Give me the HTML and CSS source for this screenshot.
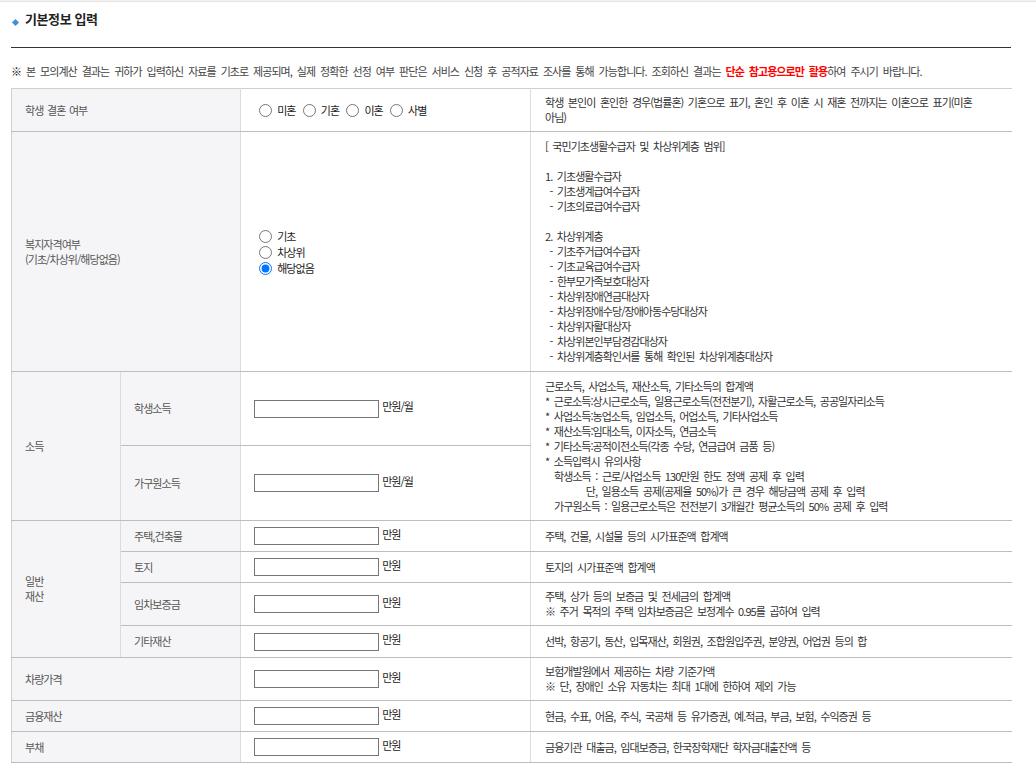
FILE: index.html
```html
<!DOCTYPE html>
<html lang="ko">
<head>
<meta charset="utf-8">
<title>기본정보 입력</title>
<link rel="stylesheet" href="styles.css">
</head>
<body>
<div class="topstrip"><span></span><span></span><span></span></div>
<div class="wrap">
  <h2 class="title"><span class="diamond"></span>기본정보 입력</h2>
  <p class="notice"><b class="kome">※</b> 본 모의계산 결과는 귀하가 입력하신 자료를 기초로 제공되며, 실제 정확한 선정 여부 판단은 서비스 신청 후 공적자료 조사를 통해 가능합니다. 조회하신 결과는 <strong class="red">단순 참고용으로만 활용</strong>하여 주시기 바랍니다.</p>
  <table class="form">
    <colgroup>
      <col class="c1"><col class="c2"><col class="c3"><col class="c4">
    </colgroup>
    <tbody>
      <tr class="h43">
        <th colspan="2">학생 결혼 여부</th>
        <td class="inp"><label><input type="radio" name="m"> 미혼</label> <label><input type="radio" name="m"> 기혼</label> <label><input type="radio" name="m"> 이혼</label> <label><input type="radio" name="m"> 사별</label></td>
        <td class="desc">학생 본인이 혼인한 경우(법률혼) 기혼으로 표기, 혼인 후 이혼 시 재혼 전까지는 이혼으로 표기(미혼 아님)</td>
      </tr>
      <tr class="h240">
        <th colspan="2">복지자격여부<br>(기초/차상위/해당없음)</th>
        <td class="inp vradio">
          <label><input type="radio" name="w"> 기초</label>
          <label><input type="radio" name="w"> 차상위</label>
          <label><input type="radio" name="w" checked> 해당없음</label>
        </td>
        <td class="desc pre">[ 국민기초생활수급자 및 차상위계층 범위]

1. 기초생활수급자
 - 기초생계급여수급자
 - 기초의료급여수급자

2. 차상위계층
 - 기초주거급여수급자
 - 기초교육급여수급자
 - 한부모가족보호대상자
 - 차상위장애연금대상자
 - 차상위장애수당/장애아동수당대상자
 - 차상위자활대상자
 - 차상위본인부담경감대상자
 - 차상위계층확인서를 통해 확인된 차상위계층대상자</td>
      </tr>
      <tr class="h74">
        <th rowspan="2" class="g">소득</th>
        <th class="sub">학생소득</th>
        <td class="inp"><input type="text" class="box"> 만원/월</td>
        <td class="desc pre" rowspan="2">근로소득, 사업소득, 재산소득, 기타소득의 합계액
* 근로소득:상시근로소득, 일용근로소득(전전분기), 자활근로소득, 공공일자리소득
* 사업소득:농업소득, 임업소득, 어업소득, 기타사업소득
* 재산소득:임대소득, 이자소득, 연금소득
* 기타소득:공적이전소득(각종 수당, 연금급여 금품 등)
* 소득입력시 유의사항
  학생소득 : 근로/사업소득 130만원 한도 정액 공제 후 입력
         단, 일용소득 공제(공제율 50%)가 큰 경우 해당금액 공제 후 입력
  가구원소득 : 일용근로소득은 전전분기 3개월간 평균소득의 50% 공제 후 입력</td>
      </tr>
      <tr class="h75">
        <th class="sub">가구원소득</th>
        <td class="inp"><input type="text" class="box"> 만원/월</td>
      </tr>
      <tr class="h31">
        <th rowspan="4" class="g">일반<br>재산</th>
        <th class="sub">주택,건축물</th>
        <td class="inp"><input type="text" class="box"> 만원</td>
        <td class="desc">주택, 건물, 시설물 등의 시가표준액 합계액</td>
      </tr>
      <tr class="h31">
        <th class="sub">토지</th>
        <td class="inp"><input type="text" class="box"> 만원</td>
        <td class="desc">토지의 시가표준액 합계액</td>
      </tr>
      <tr class="h43">
        <th class="sub">임차보증금</th>
        <td class="inp"><input type="text" class="box"> 만원</td>
        <td class="desc">주택, 상가 등의 보증금 및 전세금의 합계액<br>※ 주거 목적의 주택 임차보증금은 보정계수 0.95를 곱하여 입력</td>
      </tr>
      <tr class="h32">
        <th class="sub">기타재산</th>
        <td class="inp"><input type="text" class="box"> 만원</td>
        <td class="desc">선박, 항공기, 동산, 입목재산, 회원권, 조합원입주권, 분양권, 어업권 등의 합</td>
      </tr>
      <tr class="h43">
        <th colspan="2">차량가격</th>
        <td class="inp"><input type="text" class="box"> 만원</td>
        <td class="desc">보험개발원에서 제공하는 차량 기준가액<br>※ 단, 장애인 소유 자동차는 최대 1대에 한하여 제외 가능</td>
      </tr>
      <tr class="h31">
        <th colspan="2">금융재산</th>
        <td class="inp"><input type="text" class="box"> 만원</td>
        <td class="desc">현금, 수표, 어음, 주식, 국공채 등 유가증권, 예.적금, 부금, 보험, 수익증권 등</td>
      </tr>
      <tr class="h31">
        <th colspan="2">부채</th>
        <td class="inp"><input type="text" class="box"> 만원</td>
        <td class="desc">금융기관 대출금, 임대보증금, 한국장학재단 학자금대출잔액 등</td>
      </tr>
    </tbody>
  </table>
</div>
</body>
</html>
```

FILE: styles.css
```css
* { box-sizing: border-box; }
html, body { margin: 0; padding: 0; background: #fff; }
body {
  font-family: "Noto Sans CJK KR", "Noto Sans", sans-serif;
  font-size: 11px;
  color: #333;
  letter-spacing: -0.95px;
  word-spacing: 2.4px;
}
.topstrip {
  height: 2px;
  background: #f2f2f2;
  border-bottom: 1px solid #e4e4e4;
  display: flex;
}
.wrap {
  padding-left: 11px;
  width: 1011px;
}
.title {
  margin: 0;
  padding-top: 8px;
  height: 46px;
  font-size: 13px;
  font-weight: bold;
  color: #222;
  letter-spacing: -0.4px;
  word-spacing: 0;
  border-bottom: 1px solid #333;
  display: flex;
  align-items: flex-start;
  line-height: 18px;
}
.diamond {
  width: 5px;
  height: 5px;
  background: #3f8fd9;
  transform: rotate(45deg);
  margin: 10px 7px 0 2px;
}
.notice {
  margin: 0;
  height: 40px;
  padding-top: 16px;
  line-height: 15px;
  color: #444;
  white-space: nowrap;
  word-spacing: 2.8px;
}
.kome { color: #111; font-weight: bold; }
.red { color: #f00; font-weight: bold; }
.form {
  width: 1000px;
  border-collapse: collapse;
  table-layout: fixed;
  border-top: 1px solid #cfcfcf;
  border-left: 1px solid #d0d0d0;
}
.c1 { width: 109px; }
.c2 { width: 120px; }
.c3 { width: 290px; }
.c4 { width: 481px; }
.form th, .form td {
  border-bottom: 1px solid #bdbdbd;
  border-right: 1px solid #dcdcdc;
  line-height: 15px;
  vertical-align: middle;
  padding: 0;
}
.form td.desc { border-right: none; }
.form th {
  background: #f5f5f7;
  color: #555;
  font-weight: normal;
  text-align: left;
  padding-left: 13px;
  word-spacing: 1.5px;
}
.form th.sub { padding-left: 13px; }
.form td.inp { padding-left: 13px; color: #222; word-spacing: 0; }
.form td.desc { padding: 0 14px; color: #333; word-break: keep-all; }
.pre { white-space: pre; }
.h43 { height: 43px; }
.h240 { height: 240px; }
.h74 { height: 74px; }
.h75 { height: 75px; }
.h31 { height: 31px; }
.h32 { height: 32px; }
input[type="radio"] {
  width: 13px;
  height: 13px;
  margin: 0 3px 0 5px;
  vertical-align: -2px;
}
.vradio label { display: block; line-height: 16px; }
.box {
  width: 125px;
  height: 18px;
  border: 1px solid #767676;
  padding: 0;
  margin: 0 1px 0 0;
  vertical-align: middle;
  background: #fff;
}
```
